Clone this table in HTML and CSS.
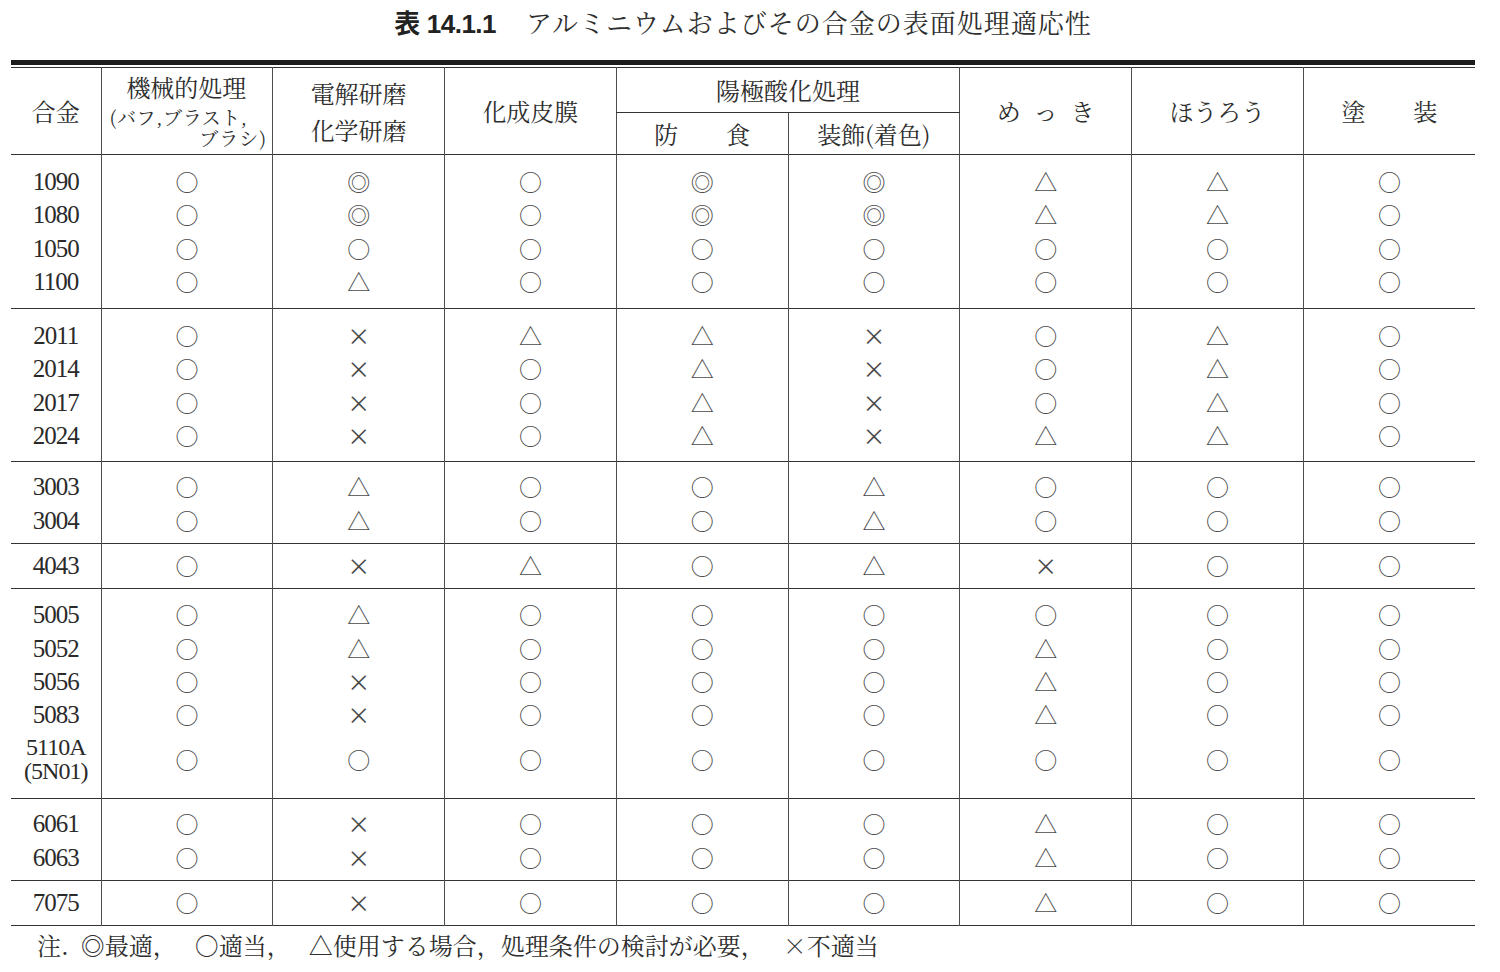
FILE: index.html
```html
<!DOCTYPE html>
<html lang="ja">
<head>
<meta charset="utf-8">
<title>表 14.1.1</title>
<link rel="stylesheet" href="styles.css">
</head>
<body>
<div class="page">
  <h1 class="title"><span class="tno"><span class="tk">表</span> <span class="tn">14.1.1</span></span><span class="tt">アルミニウムおよびその合金の表面処理適応性</span></h1>
  <div class="rule"></div>
  <table>
    <colgroup>
      <col class="c0"><col><col><col><col><col><col><col><col>
    </colgroup>
    <thead>
      <tr class="h1">
        <th rowspan="2" class="first">合金</th>
        <th rowspan="2" class="mech"><div class="m1">機械的処理</div><div class="m2">(バフ,ブラスト,</div><div class="m3">ブラシ)</div></th>
        <th rowspan="2" class="two"><div>電解研磨</div><div>化学研磨</div></th>
        <th rowspan="2">化成皮膜</th>
        <th colspan="2" class="anod">陽極酸化処理</th>
        <th rowspan="2" class="sp">めっき</th>
        <th rowspan="2">ほうろう</th>
        <th rowspan="2">塗　　装</th>
      </tr>
      <tr class="h2">
        <th>防　　食</th>
        <th>装飾(着色)</th>
      </tr>
    </thead>
    <tbody class="g1">
      <tr class="f"><td class="a">1090</td><td>○</td><td>◎</td><td>○</td><td>◎</td><td>◎</td><td>△</td><td>△</td><td>○</td></tr>
      <tr><td class="a">1080</td><td>○</td><td>◎</td><td>○</td><td>◎</td><td>◎</td><td>△</td><td>△</td><td>○</td></tr>
      <tr><td class="a">1050</td><td>○</td><td>○</td><td>○</td><td>○</td><td>○</td><td>○</td><td>○</td><td>○</td></tr>
      <tr class="l"><td class="a">1100</td><td>○</td><td>△</td><td>○</td><td>○</td><td>○</td><td>○</td><td>○</td><td>○</td></tr>
    </tbody>
    <tbody class="g2">
      <tr class="f"><td class="a">2011</td><td>○</td><td>×</td><td>△</td><td>△</td><td>×</td><td>○</td><td>△</td><td>○</td></tr>
      <tr><td class="a">2014</td><td>○</td><td>×</td><td>○</td><td>△</td><td>×</td><td>○</td><td>△</td><td>○</td></tr>
      <tr><td class="a">2017</td><td>○</td><td>×</td><td>○</td><td>△</td><td>×</td><td>○</td><td>△</td><td>○</td></tr>
      <tr class="l"><td class="a">2024</td><td>○</td><td>×</td><td>○</td><td>△</td><td>×</td><td>△</td><td>△</td><td>○</td></tr>
    </tbody>
    <tbody class="g3">
      <tr class="f"><td class="a">3003</td><td>○</td><td>△</td><td>○</td><td>○</td><td>△</td><td>○</td><td>○</td><td>○</td></tr>
      <tr class="l"><td class="a">3004</td><td>○</td><td>△</td><td>○</td><td>○</td><td>△</td><td>○</td><td>○</td><td>○</td></tr>
    </tbody>
    <tbody class="g4">
      <tr class="f l"><td class="a">4043</td><td>○</td><td>×</td><td>△</td><td>○</td><td>△</td><td>×</td><td>○</td><td>○</td></tr>
    </tbody>
    <tbody class="g5">
      <tr class="f"><td class="a">5005</td><td>○</td><td>△</td><td>○</td><td>○</td><td>○</td><td>○</td><td>○</td><td>○</td></tr>
      <tr><td class="a">5052</td><td>○</td><td>△</td><td>○</td><td>○</td><td>○</td><td>△</td><td>○</td><td>○</td></tr>
      <tr><td class="a">5056</td><td>○</td><td>×</td><td>○</td><td>○</td><td>○</td><td>△</td><td>○</td><td>○</td></tr>
      <tr><td class="a">5083</td><td>○</td><td>×</td><td>○</td><td>○</td><td>○</td><td>△</td><td>○</td><td>○</td></tr>
      <tr class="x"><td class="a">5110A<br>(5N01)</td><td>○</td><td>○</td><td>○</td><td>○</td><td>○</td><td>○</td><td>○</td><td>○</td></tr>
    </tbody>
    <tbody class="g6">
      <tr class="f"><td class="a">6061</td><td>○</td><td>×</td><td>○</td><td>○</td><td>○</td><td>△</td><td>○</td><td>○</td></tr>
      <tr class="l"><td class="a">6063</td><td>○</td><td>×</td><td>○</td><td>○</td><td>○</td><td>△</td><td>○</td><td>○</td></tr>
    </tbody>
    <tbody class="g7">
      <tr class="f l"><td class="a">7075</td><td>○</td><td>×</td><td>○</td><td>○</td><td>○</td><td>△</td><td>○</td><td>○</td></tr>
    </tbody>
  </table>
  <p class="note"><span class="n0">注.</span><span class="ni">◎最適，</span><span class="ni">○適当，</span><span class="ni">△使用する場合，処理条件の検討が必要，</span><span class="nl">×不適当</span></p>
</div>
</body>
</html>
```

FILE: styles.css
```css
html, body {
  margin: 0;
  padding: 0;
  background: #ffffff;
}

body {
  color: #2e2e2e;
  font-family: "Noto Serif CJK JP", "Noto Sans CJK JP", serif;
}

.page {
  width: 1464px;
  margin-left: 11px;
}

.title {
  margin: 0;
  padding-top: 8px;
  height: 28px;
  line-height: 28px;
  font-size: 26px;
  font-weight: normal;
  text-align: center;
  white-space: nowrap;
}

.tno {
  font-weight: bold;
  color: #222;
}

.tk {
  font-family: "Noto Sans CJK JP", sans-serif;
  font-weight: bold;
}

.tn {
  font-family: "Liberation Sans", Arial, sans-serif;
  font-weight: bold;
  letter-spacing: -0.5px;
}

.tt {
  margin-left: 30px;
  letter-spacing: 1px;
}

.rule {
  margin-top: 24px;
  height: 2px;
  border-top: 5px solid #1c1c1c;
}

table {
  width: 1464px;
  border-collapse: collapse;
  table-layout: fixed;
  border-top: 1px solid #333;
  border-bottom: 1.5px solid #333;
}

col.c0 {
  width: 90px;
}

th, td {
  padding: 0;
  text-align: center;
  vertical-align: middle;
  border-left: 1.5px solid #4d4d4d;
}

th.first, td.a {
  border-left: none;
}

th {
  font-weight: normal;
  font-size: 24px;
  line-height: 28px;
}

thead {
  border-bottom: 1.5px solid #333;
}

tr.h1 th {
  height: 44px;
}

tr.h2 th {
  height: 41px;
}

th.anod {
  border-bottom: 1.5px solid #333;
}

th.two div + div {
  margin-top: 9px;
}

th.mech {
  text-align: left;
  padding-left: 8px;
  padding-right: 5px;
}

.m1 {
  text-align: center;
  line-height: 26px;
  padding-right: 4px;
}

.m2 {
  font-size: 19px;
  line-height: 21px;
  margin-top: 6px;
  letter-spacing: 0.6px;
  white-space: nowrap;
}

.m3 {
  font-size: 19px;
  line-height: 21px;
  text-align: right;
  letter-spacing: 1px;
}

th.sp {
  letter-spacing: 13px;
  text-indent: 13px;
}

tbody {
  border-top: 1.5px solid #333;
}

td {
  font-family: "Noto Sans CJK JP", sans-serif;
  font-size: 23px;
  line-height: 33.3px;
  color: #4a4a4a;
}

td.a {
  font-family: "Liberation Serif", "Times New Roman", serif;
  font-size: 25px;
  letter-spacing: -1px;
  color: #2a2a2a;
}

.g1 tr.f td, .g2 tr.f td { padding-top: 10px; }
.g1 tr.l td { padding-bottom: 10px; }
.g2 tr.l td { padding-bottom: 9px; }
.g3 tr.f td, .g6 tr.f td { padding-top: 8px; }
.g3 tr.l td, .g6 tr.l td { padding-bottom: 6px; }
.g4 tr.f td { padding-top: 5.5px; padding-bottom: 5.5px; }
.g5 tr.f td { padding-top: 9px; }
.g7 tr.f td { padding-top: 5px; padding-bottom: 6px; }

tr.x td {
  padding-top: 4px;
  padding-bottom: 15px;
  line-height: 24px;
}

tr.x td.a {
  font-size: 24px;
}

.note {
  margin: 4px 0 0 26px;
  font-size: 24px;
  line-height: 30px;
  white-space: nowrap;
  color: #2e2e2e;
}

.n0 {
  margin-right: 12px;
}

.ni {
  margin-right: 18px;
}
```
